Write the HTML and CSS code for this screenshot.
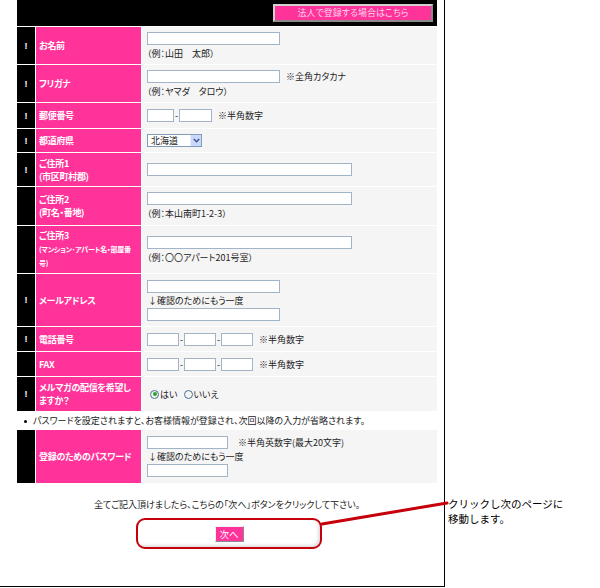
FILE: index.html
```html
<!DOCTYPE html>
<html lang="ja">

<head>
    <meta charset="utf-8">
    <meta name="viewport" content="width=device-width, initial-scale=1.0">
    <title>お客様情報の入力</title>
    <link rel="stylesheet" href="styles.css">
</head>

<body>

    <div class="sheet">
        <table class="form">
            <colgroup>
                <col class="c-req">
                <col class="c-label">
                <col class="c-val">
            </colgroup>

            <tr class="head">
                <td colspan="3"><a class="corp-btn">法人で登録する場合はこちら</a></td>
            </tr>

            <tr class="h37">
                <td class="req">!</td>
                <th>お名前</th>
                <td class="val">
                    <input class="txt w133" type="text">
                    <p class="hint">（例：山田　太郎）</p>
                </td>
            </tr>

            <tr class="h37">
                <td class="req">!</td>
                <th>フリガナ</th>
                <td class="val">
                    <div class="line"><input class="txt w133" type="text"><span class="memo">※全角カタカナ</span></div>
                    <p class="hint">（例：ヤマダ　タロウ）</p>
                </td>
            </tr>

            <tr class="h25">
                <td class="req">!</td>
                <th>郵便番号</th>
                <td class="val">
                    <div class="line">
                        <input class="txt w27" type="text"><span class="dash">-</span><input class="txt w33" type="text">
                        <span class="memo">※半角数字</span>
                    </div>
                </td>
            </tr>

            <tr class="h23">
                <td class="req">!</td>
                <th>都道府県</th>
                <td class="val">
                    <span class="pref">
                        <span class="pref-val">北海道</span>
                        <span class="pref-arrow"><svg width="7" height="5" viewBox="0 0 7 5"><path d="M0.8 1 L3.5 3.8 L6.2 1" fill="none" stroke="#3f5687" stroke-width="1.4"/></svg></span>
                    </span>
                </td>
            </tr>

            <tr class="h33">
                <td class="req">!</td>
                <th>ご住所1<br>(市区町村郡)</th>
                <td class="val">
                    <input class="txt w205" type="text">
                </td>
            </tr>

            <tr class="h38">
                <td class="req"></td>
                <th>ご住所2<br>(町名・番地)</th>
                <td class="val">
                    <input class="txt w205" type="text">
                    <p class="hint">（例：本山南町1-2-3）</p>
                </td>
            </tr>

            <tr class="h47">
                <td class="req"></td>
                <th>ご住所3<br><span class="sub">(マンション･アパート名・部屋番<br>号)</span></th>
                <td class="val">
                    <input class="txt w205" type="text">
                    <p class="hint">（例：〇〇アパート201号室）</p>
                </td>
            </tr>

            <tr class="h52">
                <td class="req">!</td>
                <th>メールアドレス</th>
                <td class="val">
                    <input class="txt w133" type="text">
                    <p class="again">↓確認のためにもう一度</p>
                    <input class="txt w133" type="text">
                </td>
            </tr>

            <tr class="h24">
                <td class="req">!</td>
                <th>電話番号</th>
                <td class="val">
                    <div class="line">
                        <input class="txt w32" type="text"><span class="dash">-</span><input class="txt w32" type="text"><span class="dash">-</span><input class="txt w32" type="text">
                        <span class="memo">※半角数字</span>
                    </div>
                </td>
            </tr>

            <tr class="h24">
                <td class="req"></td>
                <th>FAX</th>
                <td class="val">
                    <div class="line">
                        <input class="txt w32" type="text"><span class="dash">-</span><input class="txt w32" type="text"><span class="dash">-</span><input class="txt w32" type="text">
                        <span class="memo">※半角数字</span>
                    </div>
                </td>
            </tr>

            <tr class="h34">
                <td class="req">!</td>
                <th>メルマガの配信を希望し<br>ますか？</th>
                <td class="val">
                    <div class="line radios">
                        <label class="radio"><span class="dot on"></span>はい</label>
                        <label class="radio"><span class="dot"></span>いいえ</label>
                    </div>
                </td>
            </tr>

            <tr class="notice">
                <td colspan="3"><span class="bullet"></span>パスワードを設定されますと、お客様情報が登録され、次回以降の入力が省略されます。</td>
            </tr>

            <tr class="h53">
                <td class="req"></td>
                <th>登録のためのパスワード</th>
                <td class="val">
                    <div class="line"><input class="txt w81" type="password"><span class="memo wide">※半角英数字(最大20文字)</span></div>
                    <p class="again">↓確認のためにもう一度</p>
                    <input class="txt w81" type="password">
                </td>
            </tr>
        </table>

        <div class="foot">
            <p class="foot-msg">全てご記入頂けましたら、こちらの「次へ」ボタンをクリックして下さい。</p>
            <div class="next-box"><span class="next-btn">次へ</span></div>
        </div>
    </div>

    <!-- 説明用の吹き出し -->
    <svg class="callout-line" width="130" height="28" viewBox="0 0 130 28">
        <line x1="2" y1="24" x2="127" y2="3" stroke="#c5000b" stroke-width="3" stroke-linecap="round"></line>
    </svg>
    <p class="callout">クリックし次のページに<br>移動します。</p>

</body>

</html>
```

FILE: styles.css
```css
body {
    margin: 0;
    position: relative;
    font-family: "Noto Sans CJK JP", sans-serif;
    font-size: 9px;
    font-feature-settings: "palt";
    color: #222;
}

p {
    margin: 0;
}

.sheet {
    width: 444px;
    height: 587px;
    border-right: 1px solid #000;
    border-bottom: 1px solid #000;
}

/* フォーム本体 */
.form {
    border-collapse: separate;
    border-spacing: 1px;
    margin: -1px 0 0 16px;
    width: 422px;
    table-layout: fixed;
}

.c-req {
    width: 18px;
}

.c-label {
    width: 105px;
}

.c-val {
    width: 295px;
}

.form td,
.form th {
    padding: 0;
}

.form .head td {
    background: #000;
    height: 26px;
    text-align: right;
    padding-right: 4px;
    vertical-align: middle;
}

.corp-btn {
    display: inline-block;
    box-sizing: border-box;
    width: 160px;
    height: 18px;
    border: 2px solid;
    border-color: #d0d0d0 #8a8a8a #8a8a8a #d0d0d0;
    background: #ff3399;
    color: #ffd2ea;
    text-align: center;
    line-height: 14px;
    vertical-align: middle;
}

.h23 td, .h23 th { height: 23px; }
.h24 td, .h24 th { height: 24px; }
.h25 td, .h25 th { height: 25px; }
.h33 td, .h33 th { height: 33px; }
.h34 td, .h34 th { height: 34px; }
.h37 td, .h37 th { height: 37px; }
.h38 td, .h38 th { height: 38px; }
.h47 td, .h47 th { height: 47px; }
.h52 td, .h52 th { height: 52px; }
.h53 td, .h53 th { height: 53px; }

.form .req {
    background: #000;
    color: #fff;
    font-family: "Liberation Sans", sans-serif;
    font-weight: bold;
    text-align: center;
    vertical-align: middle;
}

.form th {
    background: #ff3399;
    color: #fff;
    font-size: 9px;
    font-weight: bold;
    letter-spacing: -0.3px;
    text-align: left;
    padding-left: 3px;
    line-height: 13px;
    white-space: nowrap;
    vertical-align: middle;
}

.form th .sub {
    font-size: 7px;
    letter-spacing: -0.2px;
}

.form .val {
    background: #f5f5f5;
    padding-left: 5px;
    vertical-align: middle;
}

.txt {
    display: block;
    box-sizing: border-box;
    height: 13px;
    margin: 0;
    padding: 0;
    border: 1px solid #a2b4c8;
    background: #fff;
}

.line .txt {
    display: inline-block;
}

.w27 { width: 27px; }
.w32 { width: 32px; }
.w33 { width: 33px; }
.w81 { width: 81px; }
.w133 { width: 133px; }
.w205 { width: 205px; }

.line {
    display: flex;
    align-items: center;
}

.dash {
    width: 5px;
    text-align: center;
    line-height: 13px;
}

.memo {
    margin-left: 6px;
    line-height: 13px;
}

.memo.wide {
    margin-left: 10px;
}

.hint {
    margin-top: 2px;
    line-height: 13px;
}

.again {
    line-height: 13px;
    margin: 1px 0 1px 1px;
}

/* 都道府県のプルダウン */
.pref {
    display: flex;
    box-sizing: border-box;
    width: 55px;
    height: 13px;
    border: 1px solid #7f9db9;
    background: #fff;
}

.pref-val {
    flex: 1;
    padding-left: 3px;
    line-height: 11px;
}

.pref-arrow {
    width: 10px;
    display: flex;
    align-items: center;
    justify-content: center;
    background: #c9d8fb;
    border-left: 1px solid #e6edfd;
}

/* ラジオボタン */
.radios {
    padding-left: 3px;
    gap: 6px;
}

.radio {
    display: flex;
    align-items: center;
    gap: 1px;
    line-height: 13px;
}

.dot {
    box-sizing: border-box;
    width: 9px;
    height: 9px;
    border: 1px solid #4a6f96;
    border-radius: 50%;
    background: #f4f4f0;
    display: flex;
    align-items: center;
    justify-content: center;
}

.dot.on::after {
    content: "";
    width: 4px;
    height: 4px;
    border-radius: 50%;
    background: #2aa52a;
}

.form .notice td {
    background: #fff;
    height: 17px;
    padding-left: 7px;
    vertical-align: middle;
}

.bullet {
    display: inline-block;
    width: 3px;
    height: 3px;
    border-radius: 50%;
    background: #000;
    margin-right: 6px;
    vertical-align: middle;
}

/* 下部 */
.foot {
    margin-left: 17px;
    width: 420px;
}

.foot-msg {
    margin-top: 14px;
    text-align: center;
    line-height: 13px;
}

.next-box {
    margin: 7px 0 0 119px;
    box-sizing: border-box;
    width: 186px;
    height: 31px;
    border: 2px solid #c5000b;
    border-radius: 9px;
    box-shadow: inset -2px -2px 3px #e0e0e0;
    display: flex;
    align-items: center;
    justify-content: center;
}

.next-btn {
    box-sizing: border-box;
    width: 29px;
    height: 16px;
    border: 1px solid;
    border-color: #f0f0f0 #8c8c8c #8c8c8c #f0f0f0;
    background: #ff3399;
    color: #fff;
    font-size: 9.5px;
    line-height: 14px;
    text-align: center;
}

.callout-line {
    position: absolute;
    left: 320px;
    top: 500px;
}

.callout {
    position: absolute;
    left: 448px;
    top: 496px;
    font-size: 10.5px;
    line-height: 15px;
    font-feature-settings: normal;
    color: #000;
}
```
